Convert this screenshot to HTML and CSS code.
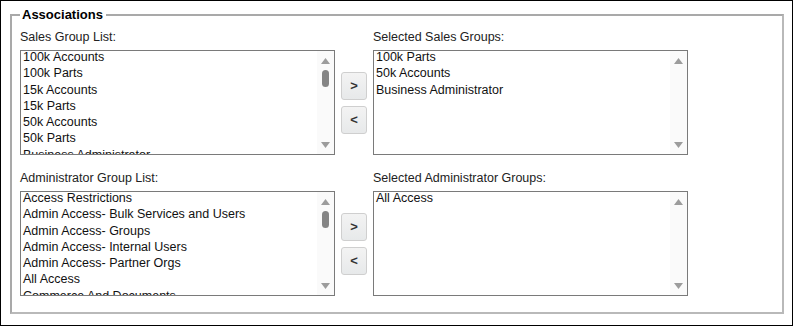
FILE: index.html
```html
<!DOCTYPE html>
<html>
<head>
<meta charset="utf-8">
<link rel="stylesheet" href="styles.css">
</head>
<body>
<div class="frame">
  <fieldset class="assoc">
    <legend>Associations</legend>

    <div class="row">
      <div class="label">Sales Group List:</div>
      <div class="label col3">Selected Sales Groups:</div>
      <div class="listbox">
        <div class="items">
          <div class="opts">
            <div>100k Accounts</div>
            <div>100k Parts</div>
            <div>15k Accounts</div>
            <div>15k Parts</div>
            <div>50k Accounts</div>
            <div>50k Parts</div>
            <div>Business Administrator</div>
          </div>
        </div>
        <div class="sb">
          <svg class="arr" width="9" height="6" viewBox="0 0 9 6"><path d="M0 6 L4.5 0 L9 6 Z" fill="#9c9c9c"/></svg>
          <div class="thumb"></div>
          <div class="fill"></div>
          <svg class="arr" width="9" height="6" viewBox="0 0 9 6"><path d="M0 0 L4.5 6 L9 0 Z" fill="#9c9c9c"/></svg>
        </div>
      </div>
      <div class="btns">
        <button class="mv">&gt;</button>
        <button class="mv">&lt;</button>
      </div>
      <div class="listbox">
        <div class="items">
          <div class="opts">
            <div>100k Parts</div>
            <div>50k Accounts</div>
            <div>Business Administrator</div>
          </div>
        </div>
        <div class="sb">
          <svg class="arr" width="9" height="6" viewBox="0 0 9 6"><path d="M0 6 L4.5 0 L9 6 Z" fill="#9c9c9c"/></svg>
          <div class="fill"></div>
          <svg class="arr" width="9" height="6" viewBox="0 0 9 6"><path d="M0 0 L4.5 6 L9 0 Z" fill="#9c9c9c"/></svg>
        </div>
      </div>
    </div>

    <div class="row row2">
      <div class="label">Administrator Group List:</div>
      <div class="label col3">Selected Administrator Groups:</div>
      <div class="listbox">
        <div class="items">
          <div class="opts">
            <div>Access Restrictions</div>
            <div>Admin Access- Bulk Services and Users</div>
            <div>Admin Access- Groups</div>
            <div>Admin Access- Internal Users</div>
            <div>Admin Access- Partner Orgs</div>
            <div>All Access</div>
            <div>Commerce And Documents</div>
          </div>
        </div>
        <div class="sb">
          <svg class="arr" width="9" height="6" viewBox="0 0 9 6"><path d="M0 6 L4.5 0 L9 6 Z" fill="#9c9c9c"/></svg>
          <div class="thumb"></div>
          <div class="fill"></div>
          <svg class="arr" width="9" height="6" viewBox="0 0 9 6"><path d="M0 0 L4.5 6 L9 0 Z" fill="#9c9c9c"/></svg>
        </div>
      </div>
      <div class="btns">
        <button class="mv">&gt;</button>
        <button class="mv">&lt;</button>
      </div>
      <div class="listbox">
        <div class="items">
          <div class="opts">
            <div>All Access</div>
          </div>
        </div>
        <div class="sb">
          <svg class="arr" width="9" height="6" viewBox="0 0 9 6"><path d="M0 6 L4.5 0 L9 6 Z" fill="#9c9c9c"/></svg>
          <div class="fill"></div>
          <svg class="arr" width="9" height="6" viewBox="0 0 9 6"><path d="M0 0 L4.5 6 L9 0 Z" fill="#9c9c9c"/></svg>
        </div>
      </div>
    </div>
  </fieldset>
</div>
</body>
</html>
```

FILE: styles.css
```css
html, body {
  margin: 0;
  padding: 0;
  background: #fff;
}

.frame {
  width: 793px;
  height: 326px;
  box-sizing: border-box;
  border: 1px solid #000;
  padding-top: 6px;
  font-family: "Liberation Sans", Arial, sans-serif;
  color: #1a1a1a;
}

.assoc {
  margin: 0 8px 0 9px;
  padding: 7px 8px 16px 8px;
  border: 2px solid #b9b9b9;
  border-color: #a9a9a9 #b9b9b9 #b9b9b9 #a9a9a9;
  min-width: 0;
}

.assoc legend {
  padding: 0 3px 0 2px;
  font-weight: bold;
  font-size: 13px;
  line-height: 16px;
  color: #000;
}

.row {
  display: grid;
  grid-template-columns: 315px 26px 315px;
  grid-template-rows: auto 105px;
  column-gap: 6px;
}

.row2 {
  margin-top: 16px;
}

.label {
  grid-column: 1;
  grid-row: 1;
  font-size: 12.5px;
  line-height: 15px;
  margin-bottom: 5px;
  color: #222;
}

.label.col3 {
  grid-column: 3;
}

.listbox {
  grid-row: 2;
  display: flex;
  box-sizing: border-box;
  height: 105px;
  border: 1px solid #7a7a7a;
  background: #fff;
  overflow: hidden;
}

.items {
  flex: 1;
  overflow: hidden;
  padding-left: 2px;
}

.opts {
  margin-top: -2px;
  font-size: 12.5px;
  line-height: 16.3px;
  color: #111;
  white-space: nowrap;
}

.sb {
  width: 17px;
  flex: none;
  background: #fafafa;
  display: flex;
  flex-direction: column;
  align-items: center;
  padding: 7px 0 6px;
  box-sizing: border-box;
}

.arr {
  display: block;
  flex: none;
}

.thumb {
  width: 7px;
  height: 17px;
  border-radius: 4px;
  background: #858585;
  margin-top: 6px;
  flex: none;
}

.fill {
  flex: 1;
}

.btns {
  grid-column: 2;
  grid-row: 2;
  align-self: center;
  display: flex;
  flex-direction: column;
  gap: 6px;
}

.mv {
  width: 26px;
  height: 28px;
  padding: 0;
  margin: 0;
  box-sizing: border-box;
  border: 1px solid #cfcfcf;
  border-radius: 3px;
  background: linear-gradient(#f3f3f3, #e7e9ea);
  font-family: "Liberation Sans", Arial, sans-serif;
  font-size: 13px;
  font-weight: bold;
  color: #333;
  line-height: 26px;
}
```
